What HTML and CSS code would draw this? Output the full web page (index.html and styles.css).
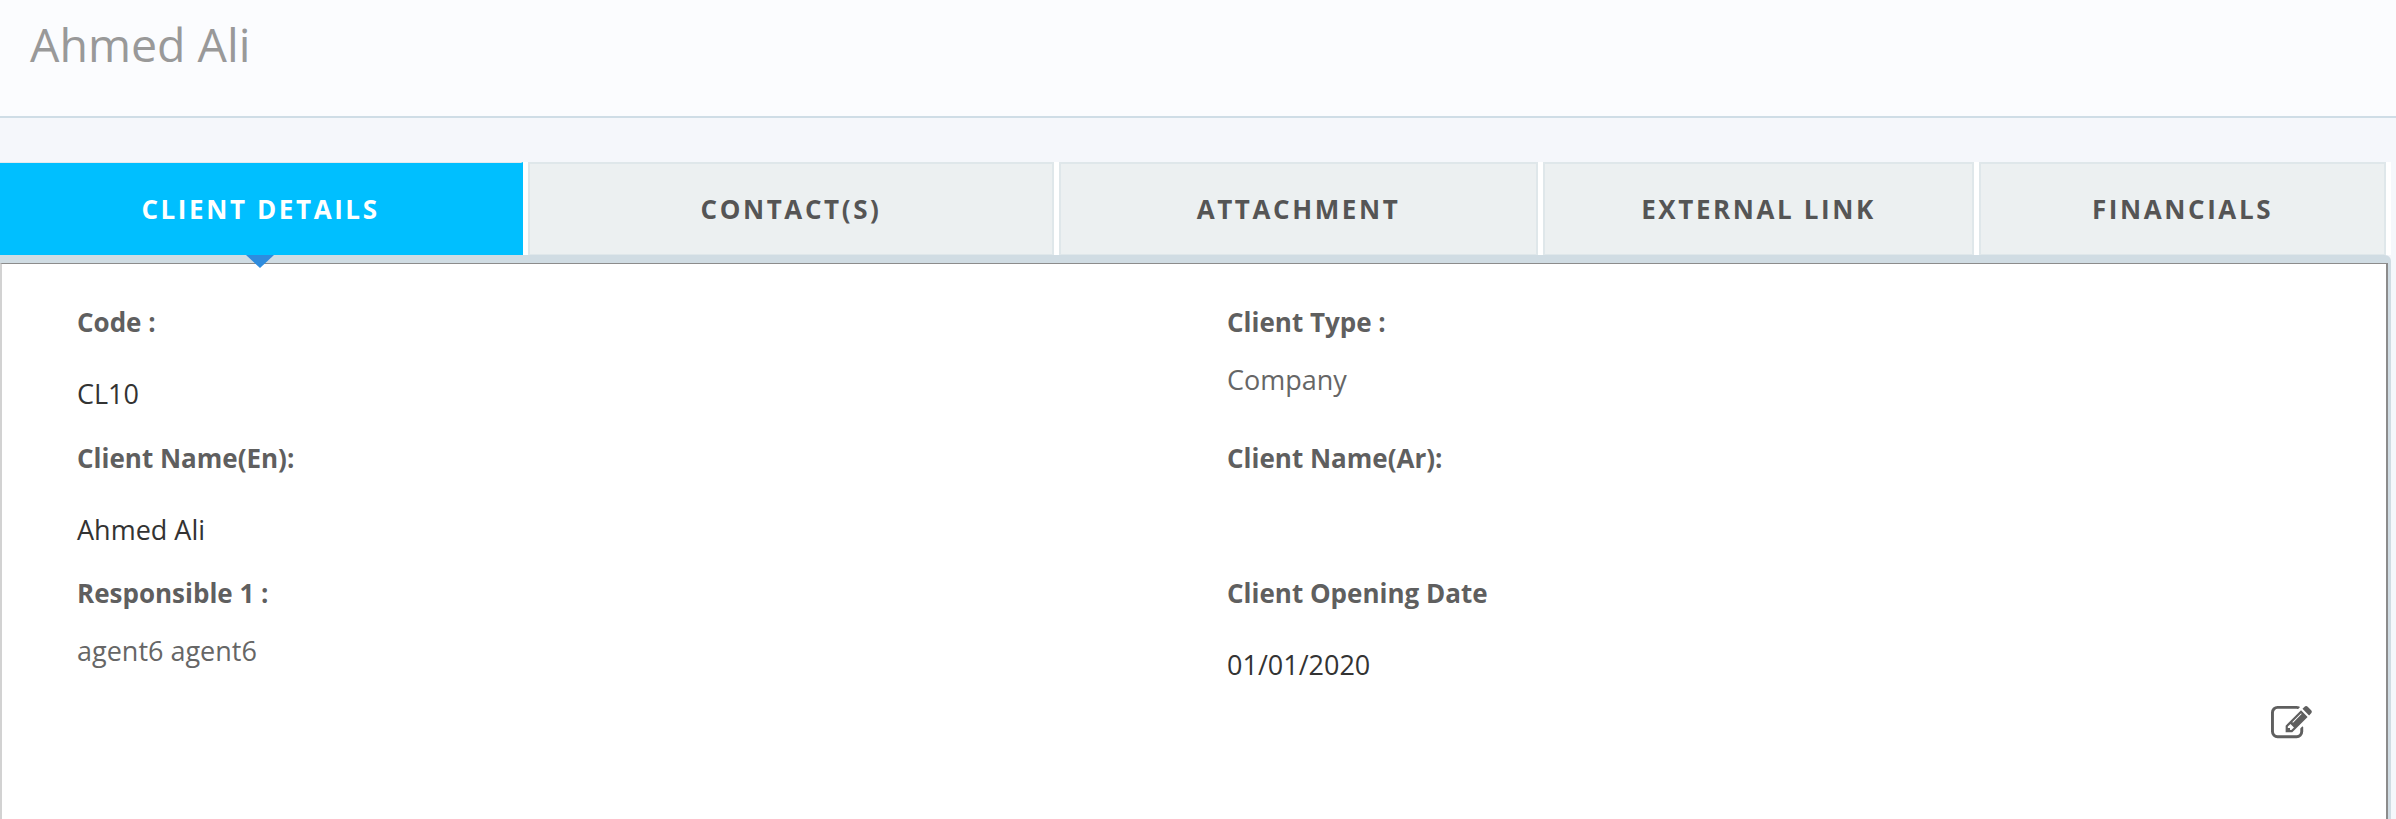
FILE: index.html
```html
<!DOCTYPE html>
<html lang="en">
<head>
<meta charset="utf-8">
<title>Ahmed Ali</title>
<link rel="stylesheet" href="styles.css">
</head>
<body>
<header class="page-head"><h1 class="page-title">Ahmed Ali</h1></header>
<main class="content">
  <nav class="tabs">
    <a class="tab tab-client active">CLIENT DETAILS<span class="tab-arrow"></span></a>
    <a class="tab tab-contact">CONTACT(S)</a>
    <a class="tab tab-attach">ATTACHMENT</a>
    <a class="tab tab-link">EXTERNAL LINK</a>
    <a class="tab tab-fin">FINANCIALS</a>
  </nav>
  <section class="band">
    <div class="panel">
      <div class="fields">
        <div class="field"><div class="label">Code :</div><div class="value strong">CL10</div></div>
        <div class="field"><div class="label">Client Type :</div><div class="value soft">Company</div></div>
        <div class="field"><div class="label">Client Name(En):</div><div class="value strong">Ahmed Ali</div></div>
        <div class="field"><div class="label">Client Name(Ar):</div><div class="value strong"></div></div>
        <div class="field"><div class="label">Responsible 1 :</div><div class="value soft">agent6 agent6</div></div>
        <div class="field"><div class="label">Client Opening Date</div><div class="value strong">01/01/2020</div></div>
      </div>
      <div class="actions">
        <svg class="edit-icon" viewBox="0 0 1792 1792" aria-label="Edit"><path d="M888 1184l116-116-152-152-116 116v56h96v96h56zm440-720q-16-16-33 1l-350 350q-17 17-1 33t33-1l350-350q17-17 1-33zm80 594v190q0 119-84.5 203.5t-203.5 84.5h-832q-119 0-203.5-84.5t-84.5-203.5v-832q0-119 84.5-203.5t203.5-84.5h832q63 0 117 25 15 7 18 23 3 17-9 29l-49 49q-14 14-32 8-23-6-45-6h-832q-66 0-113 47t-47 113v832q0 66 47 113t113 47h832q66 0 113-47t47-113v-126q0-13 9-22l64-64q15-15 35-7t20 29zm-96-738l288 288-672 672h-288v-288zm444 132l-92 92-288-288 92-92q28-28 68-28t68 28l152 152q28 28 28 68t-28 68z"/></svg>
      </div>
    </div>
  </section>
</main>
</body>
</html>
```
FILE: styles.css
```css
* { box-sizing: border-box; }
html, body { margin: 0; height: 819px; overflow: hidden; }
body { background: #f5f7fb; font-family: "Open Sans", "Noto Sans", sans-serif; color: #5a5a5a; }

.page-head { height: 118px; background: #fbfcfe; border-bottom: 2px solid #cfdde6; padding: 17px 0 0 30px; }
.page-title { margin: 0; font-size: 46.5px; line-height: 54px; font-weight: 400; color: #999; }

.content { padding-top: 44px; width: 2391px; }

.tabs { display: flex; gap: 5px; height: 93px; background: #fff; }
.tab { display: flex; align-items: center; justify-content: center; position: relative; height: 93px; background: #ecf0f1; border: 2px solid #dfe7ea; border-bottom-width: 1px; color: #555; font-size: 26px; font-weight: 700; letter-spacing: 2.6px; }
.tab-client { width: 523px; }
.tab-contact { width: 526px; }
.tab-attach { width: 479px; }
.tab-link { width: 431px; }
.tab-fin { width: 407px; }
.tab.active { background: #00bfff; color: #fff; border-color: #00bfff; border-top: 1px solid #e3eaee; border-left: 0; border-bottom: 0; }
.tab-arrow { position: absolute; left: 246px; top: 92px; z-index: 2; border-style: solid; border-width: 13px 14px 0; border-color: #2e8cde transparent transparent; }

.band { background: #d0dce3; padding: 8px 3px 0 0; border-top-right-radius: 6px; }
.panel { height: 556px; background: #fff; border: solid #8c8c8c; border-width: 1px 2px 0 2px; border-left-color: #d2d2d2; }

.fields { display: grid; grid-template-columns: 1150px 1fr; grid-auto-rows: 135.5px; padding: 40px 0 0 75px; }
.label { font-size: 26px; line-height: 36px; font-weight: 700; color: #5f5f5f; }
.value { font-size: 27px; line-height: 36px; }
.value.strong { color: #333; margin-top: 36px; }
.value.soft { color: #666; margin-top: 22px; }

.actions { display: flex; justify-content: flex-end; padding: 0 74px 0 0; margin-top: -8px; }
.edit-icon { width: 41px; height: 41px; fill: #5f5f5f; }
```
